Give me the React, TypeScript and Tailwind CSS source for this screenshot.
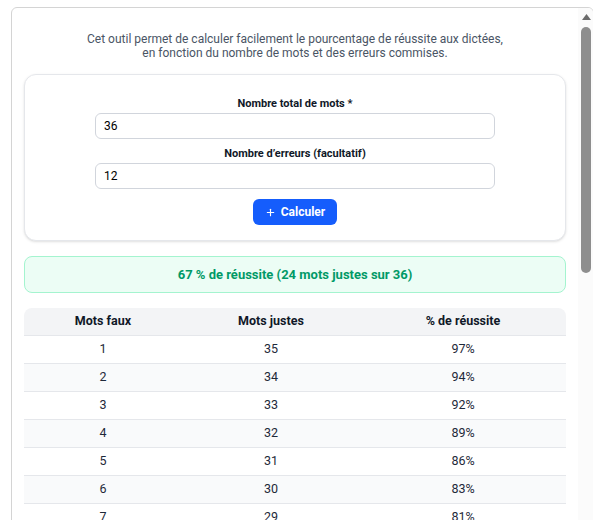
import { Plus } from "lucide-react";

const total = 36;
const rows = Array.from({ length: 35 }, (_, i) => {
  const faux = i + 1;
  const justes = total - faux;
  return { faux, justes, pct: Math.round((justes / total) * 100) };
});

export default function App() {
  return (
    <div className="min-h-screen bg-white pt-[7px] pl-[11px]" style={{ fontFamily: "Roboto, 'Noto Sans', sans-serif" }}>
      <div className="flex h-[540px] w-[583px] overflow-hidden rounded-t-md border border-[#d4d4d4] bg-white text-[#1f2937]">
        {/* content */}
        <div className="w-[566px] shrink-0 px-3 pt-[24px]">
          <p className="text-center text-[12px] leading-[14px] text-gray-600">
            Cet outil permet de calculer facilement le pourcentage de réussite aux dictées,
            <br />
            en fonction du nombre de mots et des erreurs commises.
          </p>

          <div className="mt-[14px] rounded-xl border border-gray-200 bg-white px-5 pt-[21px] pb-[15px] shadow-sm">
            <div className="flex flex-col items-center">
              <label className="text-[11px] leading-4 font-bold text-gray-900">Nombre total de mots *</label>
              <input
                defaultValue="36"
                className="mt-[1px] h-[26px] w-[400px] rounded-md border border-gray-300 px-2 text-[12px] text-black outline-none"
              />
              <label className="mt-[7px] text-[11px] leading-4 font-bold text-gray-900">Nombre d’erreurs (facultatif)</label>
              <input
                defaultValue="12"
                className="mt-[1px] h-[26px] w-[400px] rounded-md border border-gray-300 px-2 text-[12px] text-black outline-none"
              />
              <button className="mt-[10px] inline-flex h-[26px] items-center gap-[5px] rounded-md bg-blue-600 px-3 text-[12px] font-bold text-white">
                <Plus className="h-[11px] w-[11px]" strokeWidth={2.5} />
                Calculer
              </button>
            </div>
          </div>

          <div className="mt-[15px] flex h-[37px] items-center justify-center rounded-lg border border-emerald-200 bg-emerald-50 text-[13px] font-bold text-emerald-600">
            67 % de réussite (24 mots justes sur 36)
          </div>

          <table className="mt-[15px] w-full border-collapse text-[12.5px]">
            <thead>
              <tr className="bg-gray-100">
                <th className="h-[27px] w-[158px] rounded-tl-lg border-b border-gray-200 font-bold text-gray-900">Mots faux</th>
                <th className="h-[27px] w-[178px] border-b border-gray-200 font-bold text-gray-900">Mots justes</th>
                <th className="h-[27px] rounded-tr-lg border-b border-gray-200 font-bold text-gray-900">% de réussite</th>
              </tr>
            </thead>
            <tbody>
              {rows.map((r, i) => (
                <tr key={r.faux} className={`border-b border-gray-200 ${i % 2 === 1 ? "bg-gray-50" : "bg-white"}`}>
                  <td className="h-[28px] text-center text-gray-800">{r.faux}</td>
                  <td className="h-[28px] text-center text-gray-800">{r.justes}</td>
                  <td className="h-[28px] text-center text-gray-800">{r.pct}%</td>
                </tr>
              ))}
            </tbody>
          </table>
        </div>

        {/* scrollbar */}
        <div className="flex w-[15px] shrink-0 flex-col items-center bg-[#fbfbfb] pt-[6px]">
          <svg width="9" height="6" viewBox="0 0 9 6" className="ml-[1px]">
            <polygon points="4.5,0 9,6 0,6" fill="#6b6b6b" />
          </svg>
          <div className="mt-[7px] ml-[1px] h-[246px] w-[10px] rounded-full bg-[#8e8e8e]" />
        </div>
      </div>
    </div>
  );
}
